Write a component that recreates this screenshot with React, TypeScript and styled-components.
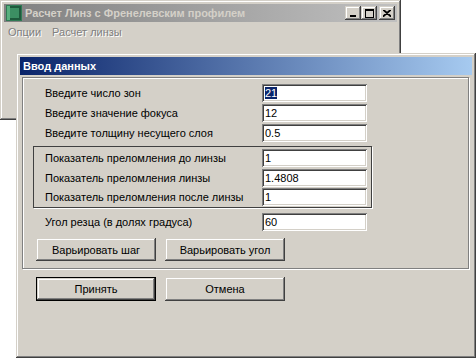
import React from "react"
import styled, { createGlobalStyle, css } from "styled-components"

const GlobalStyle = createGlobalStyle`
    html, body {
        margin: 0;
        padding: 0;
        background: #ffffff;
    }
    body {
        font-family: "Liberation Sans", Arial, sans-serif;
        font-size: 11px;
        color: #000;
    }
`

const raised = css`
    box-shadow:
        inset -1px -1px 0 #404040,
        inset 1px 1px 0 #d4d0c8,
        inset -2px -2px 0 #808080,
        inset 2px 2px 0 #ffffff;
`

const Desktop = styled.div`
    position: relative;
    width: 476px;
    height: 358px;
    overflow: hidden;
    background: #ffffff;
`

interface WinProps {
    left: number
    top: number
    w: number
    h: number
}

const Window = styled.div<WinProps>`
    position: absolute;
    left: ${p => p.left}px;
    top: ${p => p.top}px;
    width: ${p => p.w}px;
    height: ${p => p.h}px;
    box-sizing: border-box;
    padding: 4px;
    background: #d4d0c8;
    ${raised}
    display: flex;
    flex-direction: column;
`

const TitleBar = styled.div<{ active?: boolean }>`
    height: 18px;
    display: flex;
    align-items: center;
    padding: 0 2px 0 2px;
    background: ${p => p.active
        ? "linear-gradient(to right, #0a246a, #a6caf0)"
        : "linear-gradient(to right, #808080, #c0c0c0)"};
    color: ${p => p.active ? "#ffffff" : "#d4d0c8"};
    font-weight: bold;
    font-size: 11px;
    flex-shrink: 0;

    .caption {
        flex: 1;
        white-space: nowrap;
        overflow: hidden;
        margin-left: 3px;
    }
`

const Controls = styled.div`
    display: flex;
    align-items: center;
`

const CtlButton = styled.div<{ gap?: boolean }>`
    width: 16px;
    height: 14px;
    box-sizing: border-box;
    background: #d4d0c8;
    ${raised}
    margin-left: ${p => p.gap ? 2 : 0}px;
    display: flex;
    align-items: center;
    justify-content: center;
`

const MenuBar = styled.div`
    display: flex;
    height: 19px;
    align-items: center;
    padding-left: 1px;
    color: #808080;
    text-shadow: 1px 1px 0 #ffffff;

    span {
        padding: 0 6px 0 3px;
        margin-right: 2px;
    }
`

const Client = styled.div`
    flex: 1;
    display: flex;
    flex-direction: column;
    padding: 2px 3px 0 2px;
`

const GroupBox = styled.div`
    box-sizing: border-box;
    border: 1px solid #808080;
    box-shadow: inset 1px 1px 0 #ffffff, 1px 1px 0 #ffffff;
    padding: 5px 0 7px 0;
    display: flex;
    flex-direction: column;
`

const InnerGroup = styled.div`
    box-sizing: border-box;
    width: 339px;
    height: 62px;
    margin: 3px 0 0 10px;
    border: 1px solid #404040;
    box-shadow: 1px 1px 0 #ffffff;
    padding: 1px 0 0 11px;
    display: flex;
    flex-direction: column;
`

const FieldRow = styled.div<{ indent?: number; mt?: number }>`
    display: grid;
    grid-template-columns: 217px 105px;
    align-items: center;
    height: 20px;
    margin-left: ${p => p.indent ?? 0}px;
    margin-top: ${p => p.mt ?? 0}px;
`

const Label = styled.span`
    white-space: nowrap;
`

const Field = styled.div`
    box-sizing: border-box;
    height: 18px;
    background: #ffffff;
    box-shadow:
        inset 1px 1px 0 #808080,
        inset -1px -1px 0 #ffffff,
        inset 2px 2px 0 #404040,
        inset -2px -2px 0 #d4d0c8;
    padding: 3px 3px 0 3px;
    line-height: 13px;
    white-space: nowrap;

    .sel {
        background: #0a246a;
        color: #ffffff;
    }
`

const ButtonRow = styled.div<{ indent: number; mt: number }>`
    display: flex;
    gap: 9px;
    margin-left: ${p => p.indent}px;
    margin-top: ${p => p.mt}px;
`

const Button = styled.div<{ isDefault?: boolean; h: number }>`
    box-sizing: border-box;
    width: 120px;
    height: ${p => p.h}px;
    display: flex;
    align-items: center;
    justify-content: center;
    background: #d4d0c8;
    border: ${p => p.isDefault ? "1px solid #000" : "none"};
    ${raised}
`

const AppIcon = () => (
    <svg width="16" height="16" viewBox="0 0 16 16">
        <rect x="0" y="0" width="16" height="16" fill="#2f7a55" />
        <rect x="1" y="1" width="14" height="14" fill="#1e5a3c" />
        <rect x="3" y="3" width="10" height="10" fill="#3c8f63" />
        <rect x="1" y="1" width="3" height="14" fill="#59b07f" />
    </svg>
)

const App = () => {
    return (
        <>
            <GlobalStyle />
            <Desktop>
                <Window left={0} top={0} w={401} h={120}>
                    <TitleBar>
                        <AppIcon />
                        <span className="caption">Расчет Линз с Френелевским профилем</span>
                        <Controls>
                            <CtlButton>
                                <svg width="8" height="8" viewBox="0 0 8 8">
                                    <rect x="1" y="6" width="6" height="2" fill="#000" />
                                </svg>
                            </CtlButton>
                            <CtlButton>
                                <svg width="9" height="9" viewBox="0 0 9 9">
                                    <rect x="0.5" y="0.5" width="8" height="8" fill="none" stroke="#000" />
                                    <rect x="0" y="0" width="9" height="2" fill="#000" />
                                </svg>
                            </CtlButton>
                            <CtlButton gap>
                                <svg width="8" height="7" viewBox="0 0 8 7">
                                    <path d="M0 0 L8 7 M1 0 L8 6 M8 0 L0 7 M7 0 L0 6" stroke="#000" strokeWidth="1.2" />
                                </svg>
                            </CtlButton>
                        </Controls>
                    </TitleBar>
                    <MenuBar>
                        <span>Опции</span>
                        <span>Расчет линзы</span>
                    </MenuBar>
                </Window>

                <Window left={16} top={53} w={460} h={305}>
                    <TitleBar active>
                        <span className="caption" style={{ marginLeft: 1 }}>Ввод данных</span>
                    </TitleBar>
                    <Client>
                        <GroupBox>
                            <FieldRow indent={22}>
                                <Label>Введите число зон</Label>
                                <Field><span className="sel">21</span></Field>
                            </FieldRow>
                            <FieldRow indent={22}>
                                <Label>Введите значение фокуса</Label>
                                <Field>12</Field>
                            </FieldRow>
                            <FieldRow indent={22}>
                                <Label>Введите толщину несущего слоя</Label>
                                <Field>0.5</Field>
                            </FieldRow>
                            <InnerGroup>
                                <FieldRow>
                                    <Label>Показатель преломления до линзы</Label>
                                    <Field>1</Field>
                                </FieldRow>
                                <FieldRow>
                                    <Label>Показатель преломления линзы</Label>
                                    <Field>1.4808</Field>
                                </FieldRow>
                                <FieldRow>
                                    <Label>Показатель преломления после линзы</Label>
                                    <Field>1</Field>
                                </FieldRow>
                            </InnerGroup>
                            <FieldRow indent={22} mt={4}>
                                <Label>Угол резца (в долях градуса)</Label>
                                <Field>60</Field>
                            </FieldRow>
                            <ButtonRow indent={13} mt={6}>
                                <Button h={23}>Варьировать шаг</Button>
                                <Button h={23}>Варьировать угол</Button>
                            </ButtonRow>
                        </GroupBox>
                        <ButtonRow indent={14} mt={8}>
                            <Button isDefault h={24}>Принять</Button>
                            <Button h={24}>Отмена</Button>
                        </ButtonRow>
                    </Client>
                </Window>
            </Desktop>
        </>
    )
}

export default App
